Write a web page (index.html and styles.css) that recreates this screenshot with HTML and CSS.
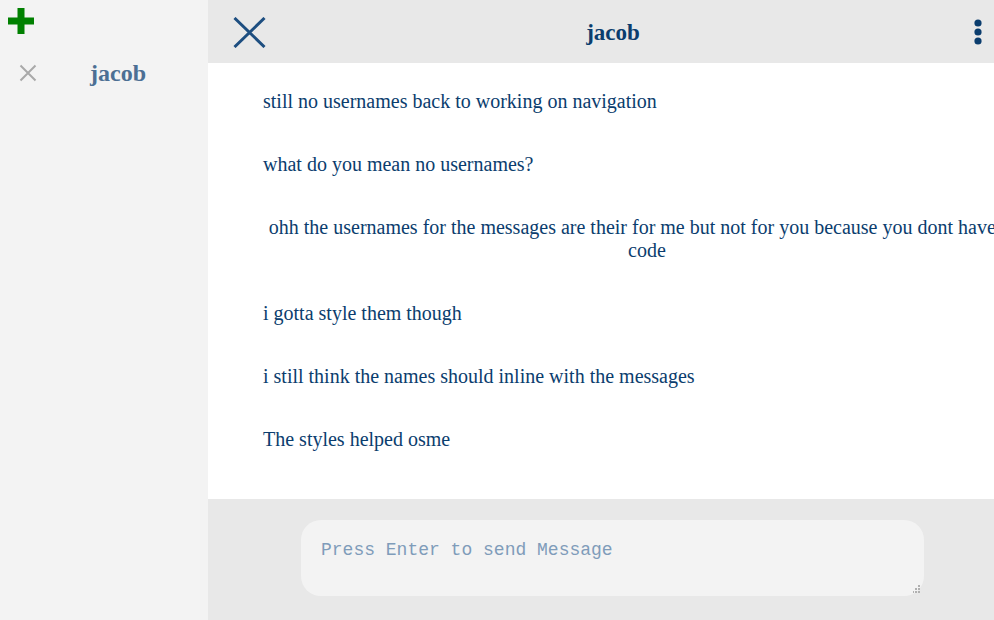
FILE: index.html
```html
<!DOCTYPE html>
<html>
<head>
<meta charset="utf-8">
<link rel="stylesheet" href="styles.css">
</head>
<body>
<div class="app">
  <aside class="sidebar">
    <div class="add">
      <svg width="26" height="26" viewBox="0 0 26 26"><path d="M9.5 0h7v9.5H26v7h-9.5V26h-7v-9.5H0v-7h9.5z" fill="#008000"/></svg>
    </div>
    <div class="contact">
      <svg class="remove" width="18" height="18" viewBox="0 0 18 18"><path d="M1.5 1.5l15 15M16.5 1.5l-15 15" stroke="#a9a9a9" stroke-width="2"/></svg>
      <span class="contact-name">jacob</span>
    </div>
  </aside>
  <main class="chat">
    <header class="chat-header">
      <svg class="close" width="33" height="31" viewBox="0 0 33 31"><path d="M1.5 1l30 29M31.5 1l-30 29" stroke="#1d4e80" stroke-width="3"/></svg>
      <h1 class="title">jacob</h1>
      <svg class="menu" width="8" height="26" viewBox="0 0 8 26"><circle cx="4" cy="4" r="3.6" fill="#0b3d6e"/><circle cx="4" cy="13" r="3.6" fill="#0b3d6e"/><circle cx="4" cy="22" r="3.6" fill="#0b3d6e"/></svg>
    </header>
    <section class="messages">
      <p class="msg">still no usernames back to working on navigation</p>
      <p class="msg">what do you mean no usernames?</p>
      <p class="msg center">ohh the usernames for the messages are their for me but not for you because you dont have the code</p>
      <p class="msg">i gotta style them though</p>
      <p class="msg">i still think the names should inline with the messages</p>
      <p class="msg">The styles helped osme</p>
    </section>
    <footer class="composer">
      <div class="input-wrap">
        <textarea class="input" placeholder="Press Enter to send Message"></textarea>
        <svg class="grip" width="8" height="8" viewBox="0 0 8 8"><rect x="5" y="0" width="2" height="2" fill="#b0b0b0"/><rect x="2" y="3" width="2" height="2" fill="#b0b0b0"/><rect x="5" y="3" width="2" height="2" fill="#b0b0b0"/><rect x="-1" y="6" width="2" height="2" fill="#b0b0b0"/><rect x="2" y="6" width="2" height="2" fill="#b0b0b0"/><rect x="5" y="6" width="2" height="2" fill="#b0b0b0"/></svg>
      </div>
    </footer>
  </main>
</div>
</body>
</html>
```
FILE: styles.css
```css
html, body {
  margin: 0;
  padding: 0;
  height: 100%;
  overflow: hidden;
}
body {
  font-family: "Liberation Serif", "Times New Roman", serif;
}
.app {
  display: flex;
  height: 620px;
  width: 994px;
  overflow: hidden;
}
.sidebar {
  width: 208px;
  flex: none;
  background: #f3f3f3;
}
.add {
  padding: 8px 0 0 8px;
  height: 26px;
}
.add svg { display: block; }
.contact {
  display: flex;
  align-items: center;
  margin-top: 26px;
  padding-left: 19px;
  height: 26px;
}
.remove { display: block; }
.contact-name {
  margin-left: 53px;
  font-size: 24px;
  font-weight: bold;
  color: #4c6f94;
  position: relative;
  top: 0;
}
.chat {
  flex: 1;
  display: flex;
  flex-direction: column;
  min-width: 0;
  background: #fff;
}
.chat-header {
  height: 63px;
  flex: none;
  background: #e8e8e8;
  display: flex;
  align-items: center;
  padding: 0 12px 0 25px;
}
.close { display: block; flex: none; margin-top: 1px; }
.title {
  flex: 1;
  margin: 0;
  text-align: center;
  font-size: 23px;
  font-weight: bold;
  color: #0b3d6e;
  padding-right: 14px;
  position: relative;
  top: 1px;
}
.menu { display: block; flex: none; }
.messages {
  flex: 1;
  padding-top: 27px;
  overflow: hidden;
}
.msg {
  margin: 0 0 0 55px;
  width: 768px;
  font-size: 20px;
  line-height: 23px;
  color: #0b3d6e;
  padding-bottom: 40px;
}
.msg.center { text-align: center; }
.composer {
  height: 121px;
  flex: none;
  background: #e8e8e8;
  padding: 21px 0 0 93px;
  box-sizing: border-box;
}
.input-wrap {
  position: relative;
  width: 623px;
  height: 76px;
}
.input {
  display: block;
  width: 623px;
  height: 76px;
  box-sizing: border-box;
  border: none;
  border-radius: 20px;
  background: #f3f3f3;
  padding: 20px 20px;
  font-family: "Liberation Mono", "Courier New", monospace;
  font-size: 18px;
  color: #0b3d6e;
  outline: none;
  resize: none;
}
.input::placeholder {
  color: #7f9cba;
}
.grip {
  position: absolute;
  right: 3px;
  bottom: 3px;
  display: block;
}
```
